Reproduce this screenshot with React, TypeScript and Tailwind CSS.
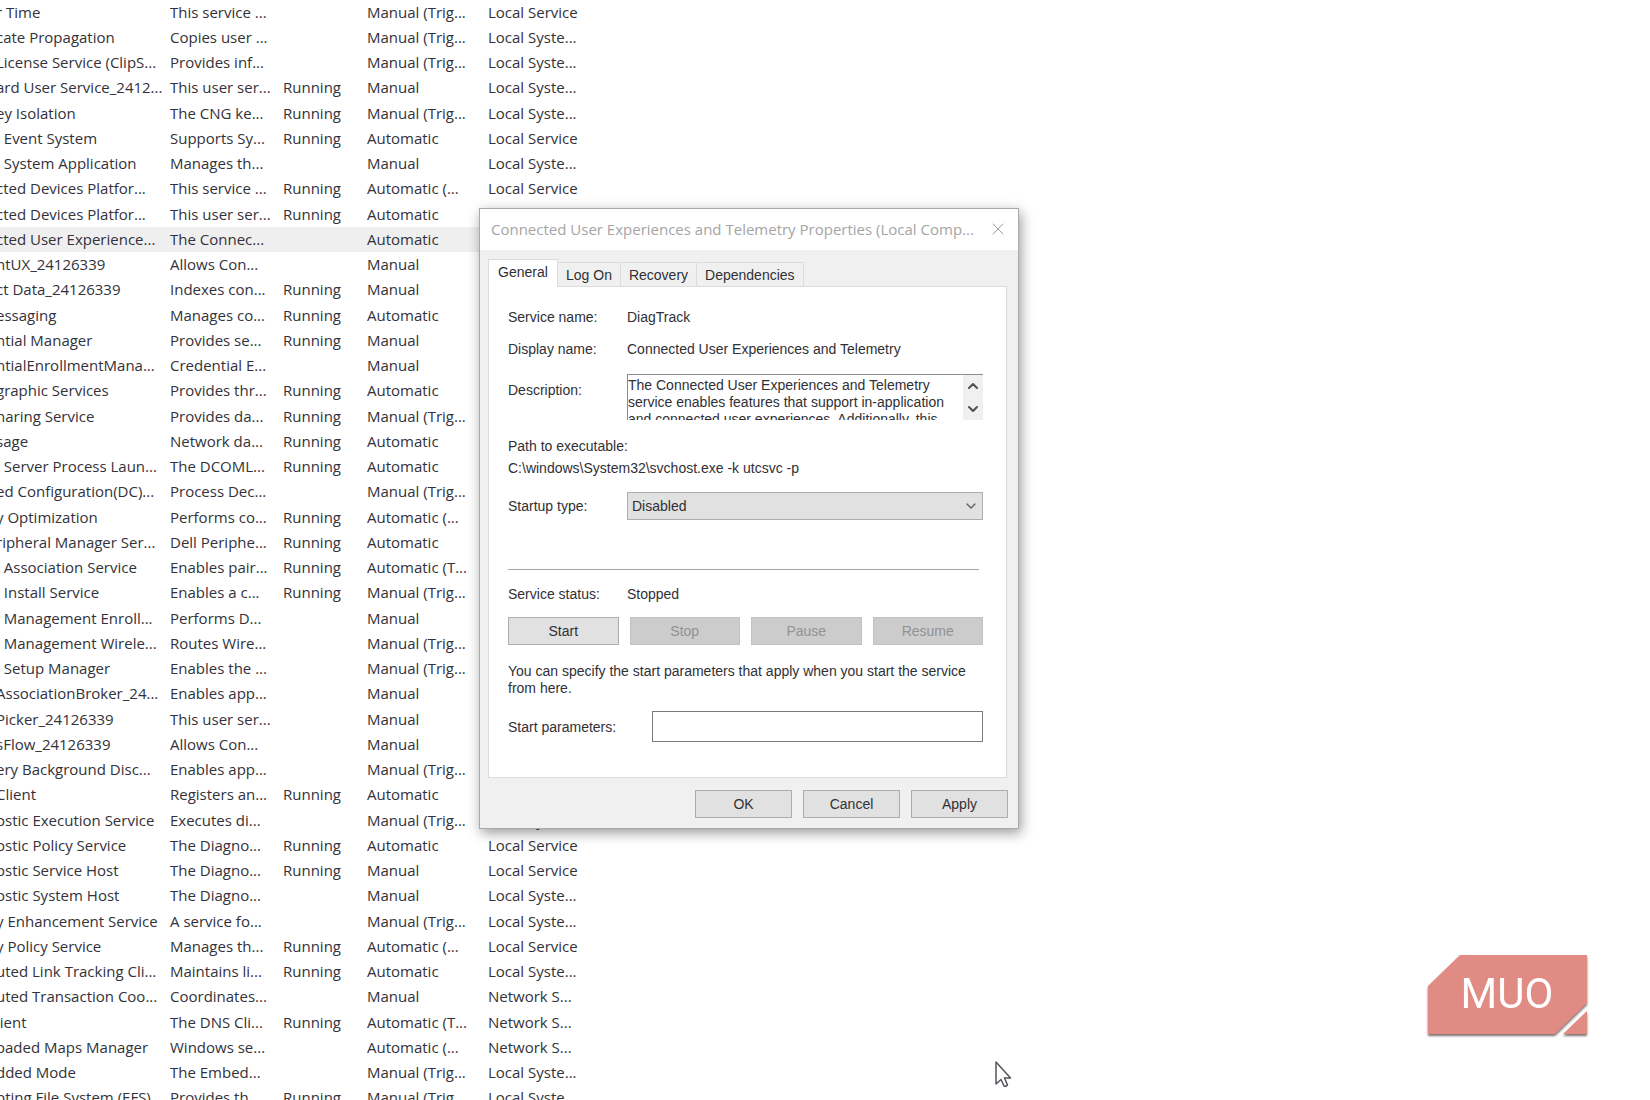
import { ChevronDown, ChevronUp, X } from 'lucide-react';

type Service = [
  name: string,
  description: string,
  status: string,
  startup: string,
  logOnAs: string,
];

const services: Service[] = [
  ['r Time', 'This service ...', '', 'Manual (Trig...', 'Local Service'],
  ['cate Propagation', 'Copies user ...', '', 'Manual (Trig...', 'Local Syste...'],
  ['License Service (ClipS...', 'Provides inf...', '', 'Manual (Trig...', 'Local Syste...'],
  ['ard User Service_2412...', 'This user ser...', 'Running', 'Manual', 'Local Syste...'],
  ['ey Isolation', 'The CNG ke...', 'Running', 'Manual (Trig...', 'Local Syste...'],
  ['  Event System', 'Supports Sy...', 'Running', 'Automatic', 'Local Service'],
  ['  System Application', 'Manages th...', '', 'Manual', 'Local Syste...'],
  ['cted Devices Platfor...', 'This service ...', 'Running', 'Automatic (...', 'Local Service'],
  ['cted Devices Platfor...', 'This user ser...', 'Running', 'Automatic', 'Local Syste...'],
  ['cted User Experience...', 'The Connec...', '', 'Automatic', 'Local Syste...'],
  ['ntUX_24126339', 'Allows Con...', '', 'Manual', 'Local Syste...'],
  ['ct Data_24126339', 'Indexes con...', 'Running', 'Manual', 'Local Syste...'],
  ['essaging', 'Manages co...', 'Running', 'Automatic', 'Local Syste...'],
  ['ntial Manager', 'Provides se...', 'Running', 'Manual', 'Local Syste...'],
  ['ntialEnrollmentMana...', 'Credential E...', '', 'Manual', 'Local Syste...'],
  ['graphic Services', 'Provides thr...', 'Running', 'Automatic', 'Network S...'],
  ['haring Service', 'Provides da...', 'Running', 'Manual (Trig...', 'Local Syste...'],
  ['sage', 'Network da...', 'Running', 'Automatic', 'Local Service'],
  ['  Server Process Laun...', 'The DCOML...', 'Running', 'Automatic', 'Local Syste...'],
  ['ed Configuration(DC)...', 'Process Dec...', '', 'Manual (Trig...', 'Local Syste...'],
  ['y Optimization', 'Performs co...', 'Running', 'Automatic (...', 'Network S...'],
  ['ripheral Manager Ser...', 'Dell Periphe...', 'Running', 'Automatic', 'Local Syste...'],
  ['  Association Service', 'Enables pair...', 'Running', 'Automatic (T...', 'Local Syste...'],
  ['  Install Service', 'Enables a c...', 'Running', 'Manual (Trig...', 'Local Syste...'],
  ['  Management Enroll...', 'Performs D...', '', 'Manual', 'Local Syste...'],
  ['  Management Wirele...', 'Routes Wire...', '', 'Manual (Trig...', 'Local Syste...'],
  ['  Setup Manager', 'Enables the ...', '', 'Manual (Trig...', 'Local Syste...'],
  ['AssociationBroker_24...', 'Enables app...', '', 'Manual', 'Local Syste...'],
  ['Picker_24126339', 'This user ser...', '', 'Manual', 'Local Syste...'],
  ['sFlow_24126339', 'Allows Con...', '', 'Manual', 'Local Syste...'],
  ['ery Background Disc...', 'Enables app...', '', 'Manual (Trig...', 'Local Syste...'],
  ['Client', 'Registers an...', 'Running', 'Automatic', 'Local Service'],
  ['ostic Execution Service', 'Executes di...', '', 'Manual (Trig...', 'Local Syste...'],
  ['ostic Policy Service', 'The Diagno...', 'Running', 'Automatic', 'Local Service'],
  ['ostic Service Host', 'The Diagno...', 'Running', 'Manual', 'Local Service'],
  ['ostic System Host', 'The Diagno...', '', 'Manual', 'Local Syste...'],
  ['y Enhancement Service', 'A service fo...', '', 'Manual (Trig...', 'Local Syste...'],
  ['y Policy Service', 'Manages th...', 'Running', 'Automatic (...', 'Local Service'],
  ['uted Link Tracking Cli...', 'Maintains li...', 'Running', 'Automatic', 'Local Syste...'],
  ['uted Transaction Coo...', 'Coordinates...', '', 'Manual', 'Network S...'],
  ['lient', 'The DNS Cli...', 'Running', 'Automatic (T...', 'Network S...'],
  ['oaded Maps Manager', 'Windows se...', '', 'Automatic (...', 'Network S...'],
  ['dded Mode', 'The Embed...', '', 'Manual (Trig...', 'Local Syste...'],
  ['pting File System (EFS)', 'Provides th...', 'Running', 'Manual (Trig...', 'Local Syste...'],
];

const selectedRow = 9;

const description = `The Connected User Experiences and Telemetry
service enables features that support in-application
and connected user experiences. Additionally, this`;

const ServiceList = () => (
  <table className="-ml-1 w-[604px] table-fixed border-collapse font-['Open_Sans',sans-serif] text-[15px] leading-6 whitespace-pre text-[#33323a]">
    <colgroup>
      <col className="w-[174px]" />
      <col className="w-[113px]" />
      <col className="w-[84px]" />
      <col className="w-[121px]" />
      <col className="w-[112px]" />
    </colgroup>
    <tbody>
      {services.map((service, row) => (
        <tr
          key={row}
          className={
            row === selectedRow
              ? 'h-[25px] bg-[#efefef] nth-[4n]:h-[26px]'
              : 'h-[25px] nth-[4n]:h-[26px]'
          }
        >
          {service.map((cell, column) => (
            <td key={column} className="p-0 align-top">
              {cell}
            </td>
          ))}
        </tr>
      ))}
    </tbody>
  </table>
);

const tabs = ['Log On', 'Recovery', 'Dependencies'];

const Tabs = () => (
  <div className="flex items-end pl-2" role="tablist">
    <button
      type="button"
      role="tab"
      aria-selected="true"
      className="relative z-10 -mb-px h-7 w-[70px] border border-b-0 border-[#dcdcdc] bg-white pb-1"
    >
      General
    </button>
    {tabs.map((tab) => (
      <button
        key={tab}
        type="button"
        role="tab"
        aria-selected="false"
        className="h-6 border border-b-0 border-l-0 border-[#dcdcdc] bg-[#f0f0f0] px-2"
      >
        {tab}
      </button>
    ))}
  </div>
);

const serviceActions = ['Stop', 'Pause', 'Resume'];

const General = () => (
  <div className="mr-[11px] ml-2 flex flex-col border border-[#dcdcdc] bg-white pt-[18px] pr-[23px] pb-[35px] pl-[19px]">
    <div className="flex h-6 items-center">
      <span className="w-[119px]">Service name:</span>
      <span>DiagTrack</span>
    </div>
    <div className="mt-2 flex h-6 items-center">
      <span className="w-[119px]">Display name:</span>
      <span>Connected User Experiences and Telemetry</span>
    </div>
    <div className="mt-[13px] flex items-start">
      <label htmlFor="description" className="mt-1 w-[119px] leading-6">
        Description:
      </label>
      <div className="flex h-[46px] flex-1 border-t border-l border-[#8c8c8c]">
        <textarea
          id="description"
          readOnly
          value={description}
          className="min-w-0 flex-1 resize-none overflow-hidden pt-0.5 leading-[17px] whitespace-pre outline-none"
        />
        <div className="flex w-5 flex-col justify-around bg-[#f0f0f0]">
          <button type="button" aria-label="Scroll up">
            <ChevronUp className="mx-auto size-4 text-[#505050]" strokeWidth={3} />
          </button>
          <button type="button" aria-label="Scroll down">
            <ChevronDown className="mx-auto size-4 text-[#505050]" strokeWidth={3} />
          </button>
        </div>
      </div>
    </div>
    <p className="mt-4 leading-5">Path to executable:</p>
    <p className="mt-0.5 leading-5">C:\windows\System32\svchost.exe -k utcsvc -p</p>
    <div className="mt-[14px] flex items-center">
      <label htmlFor="startup" className="w-[119px]">
        Startup type:
      </label>
      <div className="relative flex-1">
        <select
          id="startup"
          defaultValue="Disabled"
          className="block h-7 w-full appearance-none border border-[#adadad] bg-[#e1e1e1] px-1 outline-none"
        >
          <option>Automatic</option>
          <option>Manual</option>
          <option>Disabled</option>
        </select>
        <ChevronDown
          className="pointer-events-none absolute top-1.5 right-1 size-4 text-[#606060]"
          strokeWidth={2}
        />
      </div>
    </div>
    <hr className="mt-[49px] mr-1 border-[#a5a5a5]" />
    <div className="mt-3 flex h-6 items-center">
      <span className="w-[119px]">Service status:</span>
      <span>Stopped</span>
    </div>
    <div className="mt-[11px] grid grid-cols-4 gap-[11px]">
      <button type="button" className="h-7 border border-[#adadad] bg-[#e1e1e1]">
        Start
      </button>
      {serviceActions.map((action) => (
        <button
          key={action}
          type="button"
          disabled
          className="h-7 border border-[#c2c2c2] bg-[#cccccc] text-[#929292]"
        >
          {action}
        </button>
      ))}
    </div>
    <p className="mt-[18px] leading-[17px]">
      You can specify the start parameters that apply when you start the service
      from here.
    </p>
    <div className="mt-[14px] flex items-center">
      <label htmlFor="parameters" className="w-36">
        Start parameters:
      </label>
      <input
        id="parameters"
        type="text"
        className="h-[31px] min-w-0 flex-1 border border-[#7a7a7a] px-1 outline-none"
      />
    </div>
  </div>
);

const dialogActions = ['OK', 'Cancel', 'Apply'];

const PropertiesDialog = () => (
  <section
    role="dialog"
    aria-labelledby="dialog-title"
    className="absolute top-[208px] left-[479px] w-[540px] border border-[#a9a9a9] bg-[#f0f0f0] pb-[10px] font-['Liberation_Sans',sans-serif] text-sm leading-5 text-[#303036] shadow-[2px_4px_12px_rgba(0,0,0,0.4)]"
  >
    <header className="flex h-[41px] items-center justify-between bg-white pr-2.5 pb-0.5 pl-[11px]">
      <h1
        id="dialog-title"
        className="font-['Open_Sans',sans-serif] text-[15px] whitespace-nowrap text-[#a5a5a5]"
      >
        Connected User Experiences and Telemetry Properties (Local Comp...
      </h1>
      <button type="button" aria-label="Close">
        <X className="size-5 text-[#8a8a8a]" strokeWidth={1} />
      </button>
    </header>
    <div className="pt-[9px]">
      <Tabs />
      <General />
    </div>
    <footer className="mt-3 mr-2.5 flex justify-end gap-[11px]">
      {dialogActions.map((action) => (
        <button
          key={action}
          type="button"
          className="h-7 w-[97px] border border-[#adadad] bg-[#e1e1e1]"
        >
          {action}
        </button>
      ))}
    </footer>
  </section>
);

const Logo = () => (
  <svg
    viewBox="0 0 164 88"
    className="absolute right-[60px] bottom-[61px] w-[164px] drop-shadow-[0_2px_1px_rgba(70,50,50,0.7)]"
    role="img"
    aria-label="MUO"
  >
    <path d="M2 35 34 4H161V52L129 83H2Z" fill="#e18b85" />
    <path d="M161 60V83H137Z" fill="#e18b85" />
    <text
      x="81"
      y="57"
      textAnchor="middle"
      fill="#ffffff"
      className="font-['Roboto',sans-serif] text-[42px]"
    >
      MUO
    </text>
  </svg>
);

const Cursor = () => (
  <svg viewBox="0 0 18 28" className="absolute top-[1060px] left-[994px] w-[18px]">
    <path
      d="M2 2V24L7 19.5 10 26Q12 27 13.500 25L10.500 18H16.500Z"
      fill="#ffffff"
      stroke="#55555c"
      strokeWidth="1.500"
      strokeLinejoin="round"
    />
  </svg>
);

const App = () => (
  <main className="relative h-screen overflow-hidden bg-white">
    <ServiceList />
    <PropertiesDialog />
    <Logo />
    <Cursor />
  </main>
);

export default App;
